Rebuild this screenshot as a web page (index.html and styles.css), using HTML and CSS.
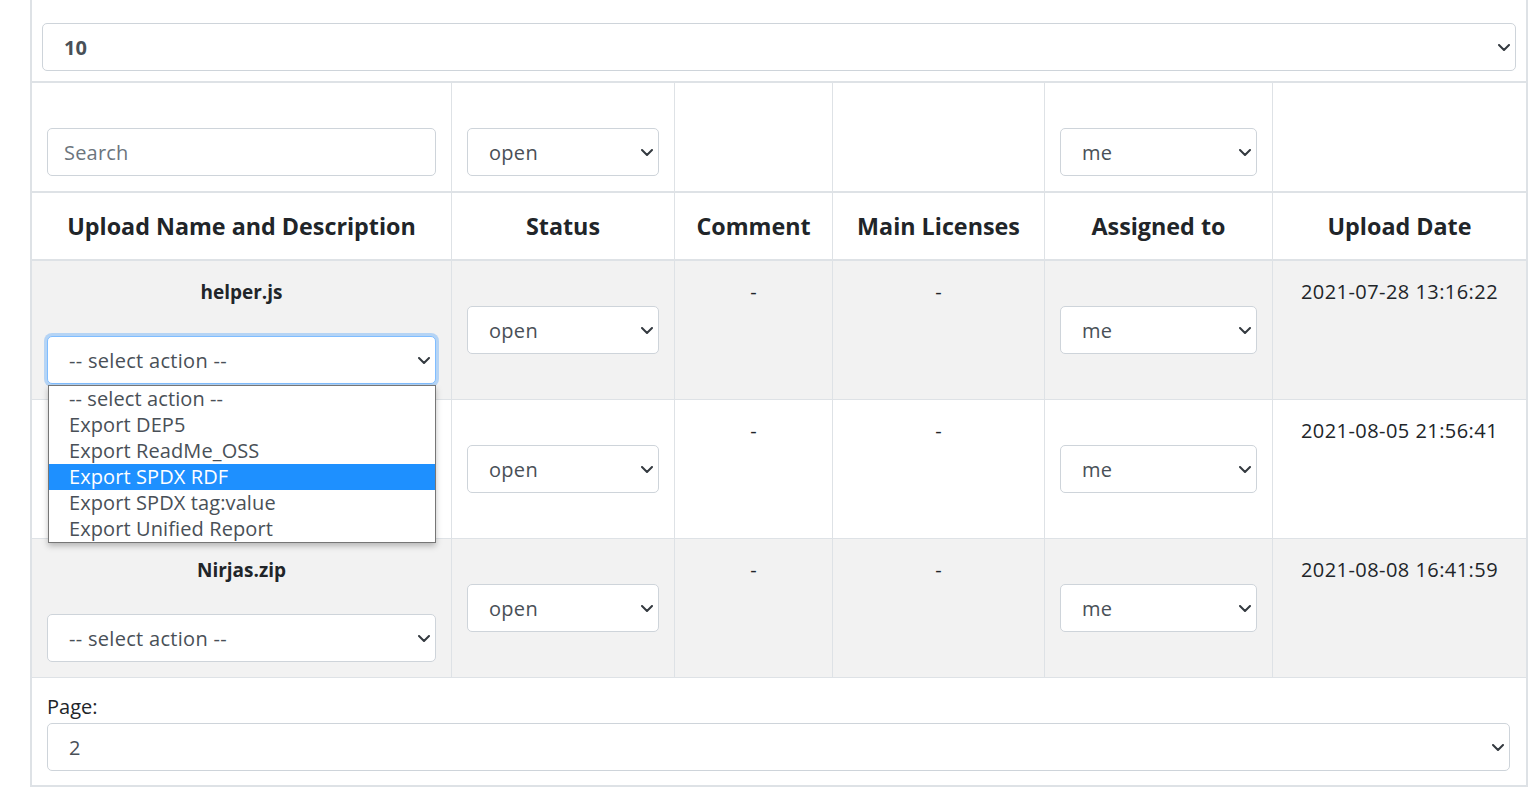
FILE: index.html
```html
<!DOCTYPE html>
<html lang="en">
<head>
<meta charset="utf-8">
<title>Uploads</title>
<link rel="stylesheet" href="styles.css">
</head>
<body>
<div class="page">
  <div class="top-bar">
    <div class="select select-bold"><span>10</span><svg class="chev" viewBox="0 0 12 7"><path d="M1 1l5 5 5-5" fill="none" stroke="#343a40" stroke-width="2" stroke-linecap="round" stroke-linejoin="round"/></svg></div>
  </div>

  <div class="table">
    <div class="row row-filter">
      <div class="cell"><div class="input">Search</div></div>
      <div class="cell"><div class="select"><span>open</span><svg class="chev" viewBox="0 0 12 7"><path d="M1 1l5 5 5-5" fill="none" stroke="#343a40" stroke-width="2" stroke-linecap="round" stroke-linejoin="round"/></svg></div></div>
      <div class="cell"></div>
      <div class="cell"></div>
      <div class="cell"><div class="select"><span>me</span><svg class="chev" viewBox="0 0 12 7"><path d="M1 1l5 5 5-5" fill="none" stroke="#343a40" stroke-width="2" stroke-linecap="round" stroke-linejoin="round"/></svg></div></div>
      <div class="cell"></div>
    </div>

    <div class="row row-head">
      <div class="cell th">Upload Name and Description</div>
      <div class="cell th">Status</div>
      <div class="cell th">Comment</div>
      <div class="cell th">Main Licenses</div>
      <div class="cell th">Assigned to</div>
      <div class="cell th">Upload Date</div>
    </div>

    <div class="row row-data striped">
      <div class="cell cell-name">
        <div class="name">helper.js</div>
        <div class="select focused"><span>-- select action --</span><svg class="chev" viewBox="0 0 12 7"><path d="M1 1l5 5 5-5" fill="none" stroke="#343a40" stroke-width="2" stroke-linecap="round" stroke-linejoin="round"/></svg></div>
        <div class="dropdown">
          <div class="opt">-- select action --</div>
          <div class="opt">Export DEP5</div>
          <div class="opt">Export ReadMe_OSS</div>
          <div class="opt active">Export SPDX RDF</div>
          <div class="opt">Export SPDX tag:value</div>
          <div class="opt">Export Unified Report</div>
        </div>
      </div>
      <div class="cell cell-mid"><div class="select"><span>open</span><svg class="chev" viewBox="0 0 12 7"><path d="M1 1l5 5 5-5" fill="none" stroke="#343a40" stroke-width="2" stroke-linecap="round" stroke-linejoin="round"/></svg></div></div>
      <div class="cell cell-top">-</div>
      <div class="cell cell-top">-</div>
      <div class="cell cell-mid"><div class="select"><span>me</span><svg class="chev" viewBox="0 0 12 7"><path d="M1 1l5 5 5-5" fill="none" stroke="#343a40" stroke-width="2" stroke-linecap="round" stroke-linejoin="round"/></svg></div></div>
      <div class="cell cell-top cell-date">2021-07-28 13:16:22</div>
    </div>

    <div class="row row-data">
      <div class="cell cell-name"></div>
      <div class="cell cell-mid"><div class="select"><span>open</span><svg class="chev" viewBox="0 0 12 7"><path d="M1 1l5 5 5-5" fill="none" stroke="#343a40" stroke-width="2" stroke-linecap="round" stroke-linejoin="round"/></svg></div></div>
      <div class="cell cell-top">-</div>
      <div class="cell cell-top">-</div>
      <div class="cell cell-mid"><div class="select"><span>me</span><svg class="chev" viewBox="0 0 12 7"><path d="M1 1l5 5 5-5" fill="none" stroke="#343a40" stroke-width="2" stroke-linecap="round" stroke-linejoin="round"/></svg></div></div>
      <div class="cell cell-top cell-date">2021-08-05 21:56:41</div>
    </div>

    <div class="row row-data striped">
      <div class="cell cell-name">
        <div class="name">Nirjas.zip</div>
        <div class="select"><span>-- select action --</span><svg class="chev" viewBox="0 0 12 7"><path d="M1 1l5 5 5-5" fill="none" stroke="#343a40" stroke-width="2" stroke-linecap="round" stroke-linejoin="round"/></svg></div>
      </div>
      <div class="cell cell-mid"><div class="select"><span>open</span><svg class="chev" viewBox="0 0 12 7"><path d="M1 1l5 5 5-5" fill="none" stroke="#343a40" stroke-width="2" stroke-linecap="round" stroke-linejoin="round"/></svg></div></div>
      <div class="cell cell-top">-</div>
      <div class="cell cell-top">-</div>
      <div class="cell cell-mid"><div class="select"><span>me</span><svg class="chev" viewBox="0 0 12 7"><path d="M1 1l5 5 5-5" fill="none" stroke="#343a40" stroke-width="2" stroke-linecap="round" stroke-linejoin="round"/></svg></div></div>
      <div class="cell cell-top cell-date">2021-08-08 16:41:59</div>
    </div>
  </div>

  <div class="pager">
    <div class="pager-label">Page:</div>
    <div class="select"><span>2</span><svg class="chev" viewBox="0 0 12 7"><path d="M1 1l5 5 5-5" fill="none" stroke="#343a40" stroke-width="2" stroke-linecap="round" stroke-linejoin="round"/></svg></div>
  </div>
</div>
</body>
</html>
```

FILE: styles.css
```css
* { box-sizing: border-box; }

html, body {
  margin: 0;
  padding: 0;
  background: #fff;
}

body {
  font-family: "Open Sans", "Noto Sans", "Liberation Sans", sans-serif;
  font-size: 20px;
  line-height: 1.5;
  color: #212529;
}

.page {
  margin-left: 30px;
  width: 1498px;
  border-left: 2px solid #dee2e6;
  border-right: 2px solid #dee2e6;
  border-bottom: 2px solid #dee2e6;
}

.top-bar {
  padding: 23px 10px 10px;
}

.select,
.input {
  height: 48px;
  border: 1px solid #ced4da;
  border-radius: 5px;
  background: #fff;
  display: flex;
  align-items: center;
  color: #495057;
  font-size: 20px;
  white-space: nowrap;
  padding-top: 2px;
}

.select {
  justify-content: space-between;
  padding-right: 5px;
  padding-left: 21px;
  letter-spacing: 0.3px;
}

.select .chev {
  margin-top: -2px;
}

.input {
  padding-left: 16px;
  padding-right: 16px;
  color: #6c757d;
  letter-spacing: 0.2px;
}

.select-bold {
  font-weight: 700;
  letter-spacing: 0;
}

.focused {
  border-color: #80bdff;
  box-shadow: 0 0 0 3px rgba(0, 123, 255, 0.25);
}

.chev {
  width: 12px;
  height: 7px;
  flex: none;
}

.table {
  border-top: 2px solid #dee2e6;
}

.row {
  display: grid;
  grid-template-columns: 420px 223px 158px 212px 228px 253px;
}

.cell {
  border-right: 1px solid #dee2e6;
  padding: 15px;
}

.cell:last-child {
  border-right: 0;
}

.row-filter {
  height: 110px;
  border-bottom: 2px solid #dee2e6;
}

.row-filter .cell {
  display: flex;
  align-items: flex-end;
}

.row-filter .cell > * {
  flex: 1;
}

.row-head {
  height: 68px;
  border-bottom: 2px solid #dee2e6;
}

.th {
  display: flex;
  align-items: center;
  justify-content: center;
  padding: 0 6px;
  font-weight: 700;
  font-size: 23.3px;
  white-space: nowrap;
  color: #212529;
}

.row-data {
  height: 139px;
  border-bottom: 1px solid #dee2e6;
}

.striped {
  background: #f2f2f2;
}

.cell-name {
  position: relative;
  display: flex;
  flex-direction: column;
  justify-content: space-between;
  text-align: center;
  padding-top: 16px;
}

.name {
  font-weight: 700;
  font-size: 19px;
  line-height: 30px;
}

.cell-mid {
  display: flex;
  align-items: center;
}

.cell-mid > .select {
  flex: 1;
}

.cell-top {
  text-align: center;
  line-height: 30px;
  padding-top: 16px;
}

.cell-date {
  letter-spacing: 0.45px;
}

.dropdown {
  position: absolute;
  left: 16px;
  top: 124px;
  width: 388px;
  background: #fff;
  border: 1px solid #767676;
  box-shadow: 0 3px 6px rgba(0, 0, 0, 0.25);
  z-index: 5;
  text-align: left;
}

.opt {
  height: 26px;
  line-height: 26px;
  padding-left: 20px;
  font-size: 20px;
  color: #495057;
  white-space: nowrap;
  letter-spacing: 0.1px;
}

.opt.active {
  background: #1e90ff;
  color: #fff;
}

.pager {
  padding: 14px 16px 14px 15px;
}

.pager-label {
  line-height: 30px;
  margin-bottom: 1px;
  color: #212529;
  padding-top: 1px;
  margin-top: -1px;
}
```
